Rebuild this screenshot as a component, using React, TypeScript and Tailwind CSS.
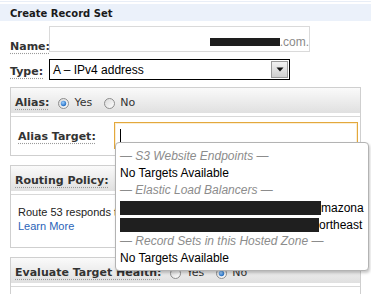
import React from "react";

const LABEL =
  "font-['DejaVu_Sans',Verdana,sans-serif] font-bold text-[11px] text-[#333] underline decoration-dotted decoration-[#9a9a9a] underline-offset-[3px]";

function Radio({ checked }: { checked: boolean }) {
  return (
    <svg width="11" height="11" viewBox="0 0 11 11" className="shrink-0">
      <defs>
        <linearGradient id="rg" x1="0" y1="0" x2="1" y2="1">
          <stop offset="0" stopColor="#d8d8d8" />
          <stop offset="1" stopColor="#ffffff" />
        </linearGradient>
        <radialGradient id="rd" cx="0.4" cy="0.35" r="0.7">
          <stop offset="0" stopColor="#9fd0ff" />
          <stop offset="1" stopColor="#1463bd" />
        </radialGradient>
      </defs>
      <circle cx="5.5" cy="5.5" r="5" fill="url(#rg)" stroke="#8d8d8d" strokeWidth="1" />
      {checked && <circle cx="5.5" cy="5.5" r="2.7" fill="url(#rd)" />}
    </svg>
  );
}

function RadioLabel({ checked, text }: { checked: boolean; text: string }) {
  return (
    <span className="flex items-center gap-[5px]">
      <Radio checked={checked} />
      <span className="font-['DejaVu_Sans',Verdana,sans-serif] text-[11px] text-[#333]">{text}</span>
    </span>
  );
}

function Panel({
  header,
  children,
  className,
}: {
  header: React.ReactNode;
  children?: React.ReactNode;
  className?: string;
}) {
  return (
    <div className={"ml-[10px] w-[351px] border border-[#cfcfcf] bg-white " + (className ?? "")}>
      <div className="h-[25px] bg-linear-to-b from-[#fafafa] to-[#e0e0e0] flex items-center pt-[5px] pl-[4px]">
        {header}
      </div>
      <div className="h-[3px]" />
      <div className="border-t border-[#d8d8d8]">{children}</div>
    </div>
  );
}

export default function App() {
  return (
    <div className="relative w-[371px] h-[294px] overflow-hidden bg-white font-['Liberation_Sans',Arial,sans-serif]">
      <div className="h-[1px] mt-[1px] bg-[#e8eef7]" />
      <div className="mt-[2px] h-[17px] bg-[#ebf1fa] flex items-center pl-[10px] pt-[1px]">
        <span className="font-['DejaVu_Sans',Verdana,sans-serif] font-bold text-[10px] text-[#1a1a1a]">
          Create Record Set
        </span>
      </div>

      {/* Name */}
      <div className="flex mt-[5px]">
        <div className="w-[49px] pl-[10px] pt-[12px] leading-[13px]">
          <span className={LABEL}>Name:</span>
        </div>
        <div className="w-[261px] h-[26px] border border-[#dadada] flex items-center justify-end pt-[5px]">
          <span className="inline-block w-[70px] h-[8px] bg-[#1e1e1e]" />
          <span className="text-[12px] text-[#8a8a8a] leading-[14px]">.com.</span>
        </div>
      </div>

      {/* Type */}
      <div className="flex items-center mt-[6px]">
        <div className="w-[49px] pl-[10px] pt-[2px] leading-[13px]">
          <span className={LABEL}>Type:</span>
        </div>
        <div className="w-[241px] h-[21px] border border-black flex items-center justify-between pl-[3px] pr-[1px]">
          <span className="text-[12px] text-black">A – IPv4 address</span>
          <span className="w-[17px] h-[17px] border border-[#9a9a9a] bg-linear-to-b from-[#f2f2f2] to-[#cfcfcf] flex items-center justify-center">
            <svg width="8" height="5" viewBox="0 0 8 5">
              <path d="M0.5 0.5 L7.5 0.5 L4 4.5 Z" fill="#111" />
            </svg>
          </span>
        </div>
      </div>

      {/* Alias */}
      <Panel
        className="mt-[7px]"
        header={
          <div className="flex items-center">
            <span className={LABEL}>Alias:</span>
            <span className="ml-[9px]">
              <RadioLabel checked text="Yes" />
            </span>
            <span className="ml-[12px]">
              <RadioLabel checked={false} text="No" />
            </span>
          </div>
        }
      >
        <div className="flex items-center pt-[5px] pb-[6px]">
          <div className="w-[103px] pl-[7px] pb-[2px]">
            <span className={LABEL}>Alias Target:</span>
          </div>
          <div className="w-[244px] h-[27px] border border-[#e3a83c] shadow-[inset_0_0_0_1px_#fbeed4] flex items-center pl-[5px]">
            <span className="w-[1px] h-[14px] bg-black" />
          </div>
        </div>
      </Panel>

      {/* Routing Policy */}
      <Panel
        className="mt-[9px]"
        header={<span className={LABEL}>Routing Policy:</span>}
      >
        <div className="pt-[10px] pb-[14px] pl-[7px] text-[11px] leading-[14px] whitespace-nowrap">
          <div className="text-[#222]">Route 53 responds to DNS queries based on the routing policy.</div>
          <div className="text-[#2a63b8]">Learn More</div>
        </div>
      </Panel>

      {/* Evaluate Target Health */}
      <Panel
        className="mt-[9px]"
        header={
          <div className="flex items-center">
            <span className={LABEL}>Evaluate Target Health:</span>
            <span className="ml-[9px]">
              <RadioLabel checked={false} text="Yes" />
            </span>
            <span className="ml-[12px]">
              <RadioLabel checked text="No" />
            </span>
          </div>
        }
      >
        <div className="h-[10px]" />
      </Panel>

      {/* Dropdown */}
      <div className="absolute left-[115px] top-[142px] w-[254px] h-[129px] border border-[#b3b3b3] rounded-[4px] bg-white shadow-[1px_2px_3px_rgba(0,0,0,0.22)] pt-[5px] pl-[4px] pr-[3px] overflow-hidden">
        <div className="h-[17px] leading-[17px] text-[12px] italic text-[#8c8c8c] whitespace-nowrap">
          — S3 Website Endpoints —
        </div>
        <div className="h-[17px] leading-[17px] text-[12px] text-black whitespace-nowrap">
          No Targets Available
        </div>
        <div className="h-[17px] leading-[17px] text-[12px] italic text-[#8c8c8c] whitespace-nowrap">
          — Elastic Load Balancers —
        </div>
        <div className="h-[17px] flex items-center text-[12px] text-black whitespace-nowrap">
          <span className="inline-block shrink-0 w-[201px] h-[14px] bg-[#1f1f1f]" />
          <span>mazona</span>
        </div>
        <div className="h-[17px] flex items-center text-[12px] text-black whitespace-nowrap">
          <span className="inline-block shrink-0 w-[199px] h-[14px] bg-[#1f1f1f]" />
          <span>ortheast</span>
        </div>
        <div className="h-[17px] leading-[17px] text-[12px] italic text-[#8c8c8c] whitespace-nowrap">
          — Record Sets in this Hosted Zone —
        </div>
        <div className="h-[17px] leading-[17px] text-[12px] text-black whitespace-nowrap">
          No Targets Available
        </div>
      </div>
    </div>
  );
}
